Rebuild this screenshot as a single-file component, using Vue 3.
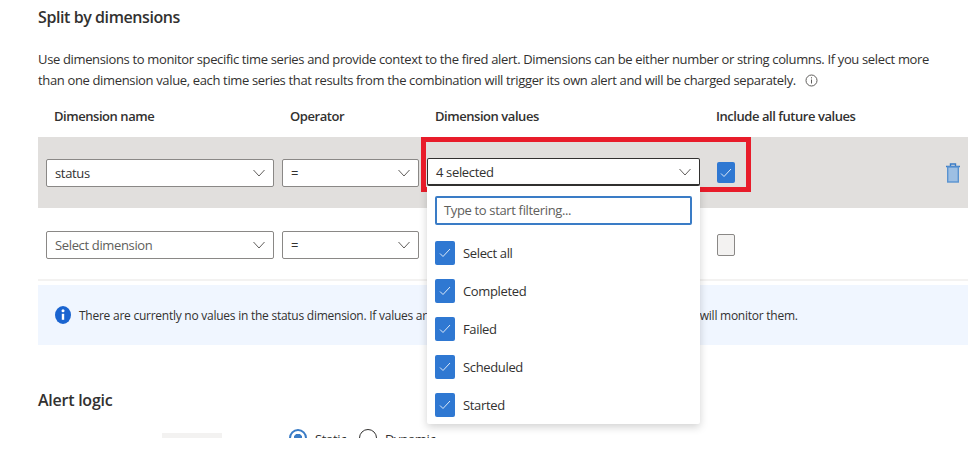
<script setup>
const options = ['Select all', 'Completed', 'Failed', 'Scheduled', 'Started']
</script>

<template>
  <div class="page">
    <h2 class="title">Split by dimensions</h2>
    <div class="desc">
      <p>Use dimensions to monitor specific time series and provide context to the fired alert. Dimensions can be either number or string columns. If you select more</p>
      <p>than one dimension value, each time series that results from the combination will trigger its own alert and will be charged separately.
        <svg class="help" width="13" height="13" viewBox="0 0 13 13">
          <circle cx="6.5" cy="6.5" r="5.5" fill="none" stroke="#605e5c" />
          <path d="M6.5 5.5v4M6.5 3.2v1.2" stroke="#605e5c" fill="none" />
        </svg>
      </p>
    </div>

    <div class="heads">
      <span class="head-name">Dimension name</span>
      <span class="head-op">Operator</span>
      <span class="head-val">Dimension values</span>
      <span>Include all future values</span>
    </div>

    <div class="grid row active">
      <div class="select"><span>status</span><svg class="chev" width="12" height="8" viewBox="0 0 12 8"><path d="M.5 1l5.5 6 5.5-6" fill="none" stroke="#605e5c" /></svg></div>
      <div class="select"><span>=</span><svg class="chev" width="12" height="8" viewBox="0 0 12 8"><path d="M.5 1l5.5 6 5.5-6" fill="none" stroke="#605e5c" /></svg></div>
      <div class="select open"><span>4 selected</span><svg class="chev" width="12" height="8" viewBox="0 0 12 8"><path d="M.5 1l5.5 6 5.5-6" fill="none" stroke="#605e5c" /></svg></div>
      <span class="check on big"><svg width="12" height="10" viewBox="0 0 12 10"><path d="M1 5.5l3 3 7-7.5" fill="none" stroke="#dce9f8" /></svg></span>
      <svg class="trash" width="14" height="20" viewBox="0 0 14 20">
        <path d="M0 3.5h14M4.5 3.5V1h5v2.5" fill="none" stroke="#3a7cc6" stroke-width="1.4" />
        <rect x="1.7" y="4" width="10.6" height="15" fill="#9dbfe3" stroke="#5a93d0" stroke-width="1.4" />
      </svg>
    </div>

    <div class="grid row second">
      <div class="select"><span class="placeholder">Select dimension</span><svg class="chev" width="12" height="8" viewBox="0 0 12 8"><path d="M.5 1l5.5 6 5.5-6" fill="none" stroke="#605e5c" /></svg></div>
      <div class="select"><span>=</span><svg class="chev" width="12" height="8" viewBox="0 0 12 8"><path d="M.5 1l5.5 6 5.5-6" fill="none" stroke="#605e5c" /></svg></div>
      <div></div>
      <span class="check big off"></span>
    </div>

    <div class="info">
      <svg width="16" height="18" viewBox="0 0 16 18">
        <ellipse cx="8" cy="9" rx="8" ry="9" fill="#1a64d0" />
        <path d="M8 7.8v6" stroke="#fff" stroke-width="2.4" fill="none" />
        <circle cx="8" cy="4.8" r="1.5" fill="#fff" />
      </svg>
      <span>There are currently no values in the status dimension. If values are added to a dimension in the future, the alert rule will monitor them.</span>
    </div>

    <h2 class="title logic">Alert logic</h2>

    <div class="threshold">
      <span class="gray-box"></span>
      <span class="radio sel"></span><span class="radio-label">Static</span>
      <span class="radio"></span><span class="radio-label">Dynamic</span>
    </div>

    <div class="highlight"></div>

    <div class="dropdown">
      <div class="filter">Type to start filtering...</div>
      <div v-for="o in options" :key="o" class="option">
        <span class="check on"><svg width="12" height="10" viewBox="0 0 12 10"><path d="M1 5.5l3 3 7-7.5" fill="none" stroke="#dce9f8" /></svg></span>
        <span>{{ o }}</span>
      </div>
    </div>
  </div>
</template>

<style>
body {
  background: #fff;
}
</style>

<style scoped>
.page {
  position: relative;
  height: 438px;
  overflow: hidden;
  padding-left: 38px;
  width: 930px;
  font-family: "Open Sans", "Noto Sans", sans-serif;
  font-size: 13px;
  letter-spacing: -0.35px;
  color: #323130;
  background: #fff;
}
.title {
  margin: 0;
  padding-top: 7px;
  font-size: 16px;
  line-height: 20px;
  font-weight: 600;
  letter-spacing: -0.42px;
}
.desc {
  margin-top: 22px;
  line-height: 21px;
  white-space: nowrap;
}
.desc p {
  margin: 0;
}
.help {
  vertical-align: -2px;
  margin-left: 6px;
}
.grid {
  display: grid;
  grid-template-columns: 228px 137px 273px 18px 1fr;
  column-gap: 8px;
  padding-left: 8px;
}
.heads {
  display: flex;
  gap: 8px;
  height: 20px;
  margin-top: 15px;
  padding-left: 16px;
  line-height: 20px;
  font-weight: 600;
  letter-spacing: -0.45px;
}
.head-name { width: 228px; }
.head-op { width: 137px; }
.head-val { width: 273px; }
.row {
  align-items: center;
}
.active {
  margin-top: 11px;
  height: 71px;
  background: #e1dfdd;
}
.second {
  box-sizing: border-box;
  height: 73px;
  padding-top: 3px;
  border-bottom: 2px solid #f3f2f1;
}
.select {
  display: flex;
  align-items: center;
  justify-content: space-between;
  box-sizing: border-box;
  height: 28px;
  padding: 0 8px;
  background: #fff;
  border: 1px solid #8a8886;
  border-radius: 2px;
}
.open {
  border-color: #323130;
  border-bottom-width: 2px;
  margin-top: -1px;
  padding-top: 1px;
}
.placeholder {
  color: #605e5c;
}
.check {
  display: inline-flex;
  align-items: center;
  justify-content: center;
  box-sizing: border-box;
  flex: none;
  width: 20px;
  height: 24px;
  border-radius: 2px;
}
.on {
  background: #2f78d2;
}
.big {
  width: 18px;
  height: 21px;
  margin-left: 9px;
}
.off {
  height: 22px;
  background: #f3f2f1;
  border: 1px solid #8a8886;
}
.trash {
  justify-self: end;
  margin-right: 8px;
}
.info {
  display: flex;
  align-items: center;
  gap: 8px;
  height: 60px;
  margin-top: 4px;
  padding-left: 17px;
  background: #f0f6ff;
  font-size: 12px;
  letter-spacing: -0.25px;
}
.logic {
  margin-top: 35px;
  padding-top: 10px;
  letter-spacing: -0.25px;
}
.threshold {
  display: flex;
  align-items: flex-start;
  margin-top: 19px;
  padding-left: 124px;
  height: 20px;
}
.gray-box {
  width: 60px;
  height: 20px;
  margin-top: 4px;
  margin-right: 67px;
  background: #f3f2f1;
}
.radio {
  box-sizing: border-box;
  width: 18px;
  height: 18px;
  border: 1px solid #323130;
  border-radius: 50%;
}
.radio.sel {
  border: 2px solid #3a7cc6;
  background: radial-gradient(circle, #3a7cc6 0 4px, #fff 4.5px);
}
.radio-label {
  margin: 1px 13px 0 8px;
}
.highlight {
  position: absolute;
  left: 421px;
  top: 137px;
  width: 320px;
  height: 45px;
  border: 5px solid #e81c2a;
  pointer-events: none;
}
.dropdown {
  position: absolute;
  left: 427px;
  top: 186px;
  box-sizing: border-box;
  width: 273px;
  height: 238px;
  padding: 10px 8px 0;
  background: #fff;
  border-radius: 0 0 2px 2px;
  box-shadow: 0 3px 8px rgba(0, 0, 0, 0.18);
}
.filter {
  box-sizing: border-box;
  height: 29px;
  margin-bottom: 9px;
  padding-left: 7px;
  line-height: 25px;
  color: #605e5c;
  border: 2px solid #3a7cc6;
  border-radius: 2px;
}
.option {
  display: flex;
  align-items: center;
  gap: 8px;
  height: 38px;
}
</style>
